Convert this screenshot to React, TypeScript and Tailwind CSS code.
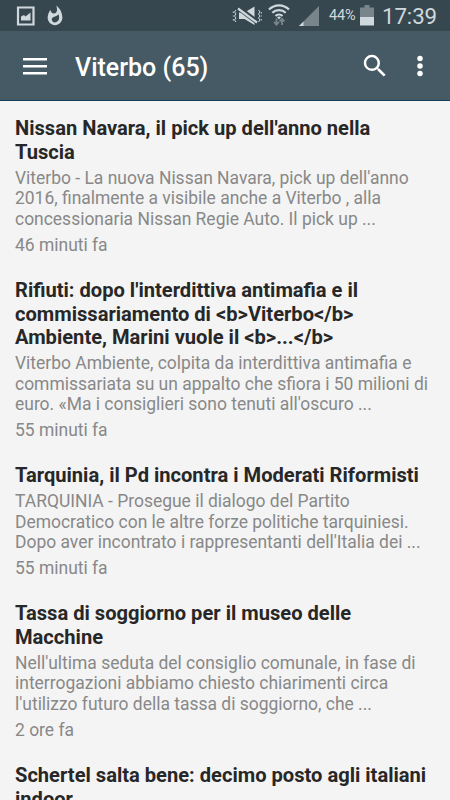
type Article = {
  title: string[]
  summary: string[]
  age: string
}

const articles: Article[] = [
  {
    title: ["Nissan Navara, il pick up dell'anno nella", 'Tuscia'],
    summary: [
      "Viterbo - La nuova Nissan Navara, pick up dell'anno",
      '2016, finalmente a visibile anche a Viterbo , alla',
      'concessionaria Nissan Regie Auto. Il pick up ...',
    ],
    age: '46 minuti fa',
  },
  {
    title: [
      "Rifiuti: dopo l'interdittiva antimafia e il",
      'commissariamento di <b>Viterbo</b>',
      'Ambiente, Marini vuole il <b>...</b>',
    ],
    summary: [
      'Viterbo Ambiente, colpita da interdittiva antimafia e',
      'commissariata su un appalto che sfiora i 50 milioni di',
      "euro. «Ma i consiglieri sono tenuti all'oscuro ...",
    ],
    age: '55 minuti fa',
  },
  {
    title: ['Tarquinia, il Pd incontra i Moderati Riformisti'],
    summary: [
      'TARQUINIA - Prosegue il dialogo del Partito',
      'Democratico con le altre forze politiche tarquiniesi.',
      "Dopo aver incontrato i rappresentanti dell'Italia dei ...",
    ],
    age: '55 minuti fa',
  },
  {
    title: ['Tassa di soggiorno per il museo delle', 'Macchine'],
    summary: [
      "Nell'ultima seduta del consiglio comunale, in fase di",
      'interrogazioni abbiamo chiesto chiarimenti circa',
      "l'utilizzo futuro della tassa di soggiorno, che ...",
    ],
    age: '2 ore fa',
  },
  {
    title: ['Schertel salta bene: decimo posto agli italiani', 'indoor'],
    summary: [],
    age: '',
  },
]

export default function App() {
  return (
    <div className="flex h-[800px] w-[450px] flex-col overflow-hidden bg-[#f4f4f4] font-['Roboto',sans-serif]">
      <StatusBar />
      <Toolbar />
      <main className="min-h-0 flex-1 overflow-hidden px-[15px] pt-[16.2px]">
        {articles.map((a) => (
          <ArticleRow key={a.title[0]} article={a} />
        ))}
      </main>
    </div>
  )
}

function StatusBar() {
  return (
    <div className="flex h-[31px] shrink-0 items-center bg-[#37474f] text-[#cfd8dc]">
      <svg className="ml-4 h-5 w-[19px]" viewBox="0 0 19 20" fill="none">
        <path d="M2 1.5h15.5v17H2z" stroke="currentColor" strokeWidth="2.2" />
        <path d="M5 14.5v-4l3-1.5 1.5 1.5 5-4v8z" fill="currentColor" />
      </svg>
      <svg className="ml-[9px] h-[22px] w-[22px]" viewBox="0 0 24 24" fill="currentColor">
        <path d="M13.5.67s.74 2.65.74 4.8c0 2.06-1.35 3.73-3.41 3.73-2.07 0-3.63-1.67-3.63-3.73l.03-.36C5.21 7.51 4 10.62 4 14c0 4.42 3.58 8 8 8s8-3.58 8-8C20 8.61 17.41 3.8 13.5.67zM11.71 19c-1.78 0-3.22-1.4-3.22-3.14 0-1.62 1.05-2.76 2.81-3.12 1.77-.36 3.6-1.21 4.62-2.58.39 1.29.59 2.65.59 4.04 0 2.65-2.15 4.8-4.8 4.8z" />
      </svg>

      {/* muted with vibration */}
      <svg className="ml-auto h-5 w-[30px]" viewBox="0 0 30 20" fill="none" stroke="currentColor">
        <path d="M7 6.5h5.5L22.500 .5v18.500l-10-6H7z" fill="currentColor" stroke="none" />
        <path d="M6.500 2l18 13.500" stroke="#37474f" strokeWidth="5" />
        <path d="M6 2.500l19 14" strokeWidth="2.2" />
        <path
          d="M4 4L2.500 6 4 8l-1.500 2L4 12l-1.500 2L4 16M1.300 5.500v1.500M1.300 9.500v1M1.300 13v1.500M26.500 4L28 6l-1.500 2 1.500 2-1.500 2 1.500 2-1.500 2M29.300 6v1.500M29.300 9.500v1M29.300 13v1.500"
          strokeWidth="1"
        />
      </svg>
      <svg className="ml-1.5 h-[23px] w-[22px]" viewBox="0 0 22 23" fill="none">
        <g stroke="currentColor" strokeWidth="2.2">
          <path d="M1 5.5a14 14 0 0 1 20 0" />
          <path d="M4.3 8.8a9.5 9.5 0 0 1 13.4 0" />
          <path d="M7.5 12a5 5 0 0 1 7 0" />
        </g>
        <path d="M11 15.5l-2-2.2a3.1 3.1 0 0 1 4 0z" fill="currentColor" />
        <path d="M8.5 14.5v6M6 18l2.5 2.7L11 18M14 21v-6M11.5 17.5L14 14.8l2.5 2.7" stroke="#78868c" strokeWidth="1.8" />
      </svg>
      <svg className="ml-[9px] h-5 w-5" viewBox="0 0 20 20">
        <path d="M20 0v20H0z" fill="#78868c" />
        <path d="M4.5 15.5V20H0z" fill="currentColor" />
      </svg>
      <span className="ml-2.5 w-[28px] pt-px whitespace-nowrap text-[14.5px] tracking-[-0.2px]">44%</span>
      <svg className="ml-[3px] h-[21px] w-[14px]" viewBox="0 0 14 21">
        <path d="M4.5 0h5v2.5H14V12H0V2.5h4.5z" fill="#78868c" />
        <path d="M0 12h14v8.5H0z" fill="currentColor" />
      </svg>
      <span className="mr-[14px] ml-2 w-[54px] pt-[3px] whitespace-nowrap text-[22.3px] tracking-[-0.1px]">17:39</span>
    </div>
  )
}

function Toolbar() {
  return (
    <header className="flex h-[70px] shrink-0 items-center border-b border-[#12405a] bg-[#455a64] text-white">
      <svg className="mt-[2px] ml-[23px] h-[17px] w-6" viewBox="0 0 24 17" fill="currentColor">
        <path d="M0 0h24v2.5H0zM0 7h24v2.5H0zM0 14h24v2.5H0z" />
      </svg>
      <h1 className="mt-[5px] ml-7 text-[25px] font-medium">Viterbo (65)</h1>
      <svg className="mt-px ml-auto h-[30px] w-[30px]" viewBox="0 0 24 24" fill="currentColor">
        <path d="M15.5 14h-.79l-.28-.27A6.471 6.471 0 0 0 16 9.5 6.5 6.5 0 1 0 9.5 16c1.61 0 3.09-.59 4.23-1.57l.27.28v.79l5 4.99L20.49 19l-4.99-5zm-6 0C7.01 14 5 11.99 5 9.5S7.01 5 9.5 5 14 7.01 14 9.5 11.99 14 9.5 14z" />
      </svg>
      <svg className="mt-px mr-[15px] ml-[15px] h-[30px] w-[30px]" viewBox="0 0 24 24" fill="currentColor">
        <circle cx="12" cy="6" r="2.2" />
        <circle cx="12" cy="12" r="2.2" />
        <circle cx="12" cy="18" r="2.2" />
      </svg>
    </header>
  )
}

function ArticleRow({ article }: { article: Article }) {
  return (
    <article className="mb-[23.6px] whitespace-nowrap text-[17.47px] leading-[20.5px] text-[#888888]">
      <h2 className="mb-[3px] text-[20.12px] leading-[23.8px] font-bold text-[#272727]">
        {article.title.map((line) => (
          <div key={line}>{line}</div>
        ))}
      </h2>
      {article.summary.map((line) => (
        <p key={line}>{line}</p>
      ))}
      <p className="mt-[5.5px]">{article.age}</p>
    </article>
  )
}
